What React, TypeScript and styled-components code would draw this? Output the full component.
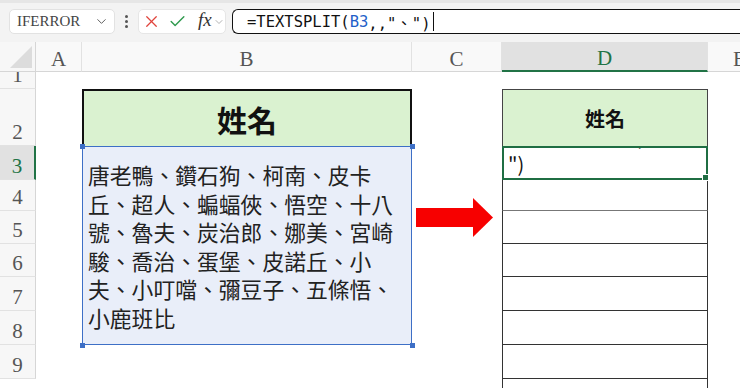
import React from 'react';
import styled, { createGlobalStyle } from 'styled-components';
import { ChevronDown, X, Check } from 'lucide-react';

const GlobalStyle = createGlobalStyle`
  html, body {
    margin: 0;
    padding: 0;
    background: #fff;
    overflow: hidden;
  }
  body {
    width: 740px;
    height: 388px;
    font-family: "Noto Sans CJK TC", "Noto Sans", sans-serif;
  }
`;

const Toolbar = styled.div`
  height: 42px;
  box-sizing: border-box;
  padding: 6px 0 0 9px;
  background: #f3f3f3;
  border-top: 3px solid #e6e6e6;
  display: flex;
  align-items: flex-start;
`;

const NameBox = styled.div`
  width: 106px;
  height: 25px;
  box-sizing: border-box;
  background: #fff;
  border: 1px solid #e2e2e2;
  border-radius: 5px;
  display: flex;
  align-items: center;
  justify-content: space-between;
  padding: 0 5px 0 7px;
  font-family: "Liberation Serif", serif;
  font-size: 15px;
  color: #444;
`;

const Dots = styled.div`
  width: 23px;
  height: 25px;
  display: flex;
  flex-direction: column;
  align-items: center;
  justify-content: center;
  gap: 2px;

  span {
    width: 3px;
    height: 3px;
    border-radius: 50%;
    background: #555;
  }
`;

const FxBox = styled.div`
  width: 88px;
  height: 25px;
  box-sizing: border-box;
  background: #fff;
  border: 1px solid #e6e6e6;
  border-radius: 5px;
  display: flex;
  align-items: center;
  padding-left: 3px;
`;

const FxLabel = styled.span`
  font-family: "Liberation Serif", serif;
  font-style: italic;
  font-size: 19px;
  color: #333;
  margin: -3px 1px 0 11px;
`;

const FormulaBox = styled.div`
  flex: 1;
  height: 25px;
  margin-left: 6px;
  box-sizing: border-box;
  border: 1.5px solid #111;
  border-right: none;
  border-radius: 6px 0 0 6px;
  background: #fff;
  display: flex;
  align-items: center;
  padding-left: 14px;
  font-family: "DejaVu Sans Mono", "Noto Sans CJK TC", monospace;
  font-size: 15.5px;
  color: #111;
  white-space: pre;
`;

const Ref = styled.span`
  color: #1f5fc9;
`;

const Caret = styled.span`
  display: inline-block;
  width: 1px;
  height: 19px;
  background: #111;
  margin-left: 2px;
`;

const Sheet = styled.div`
  display: grid;
  grid-template-columns: 36px 46px 330px 90px 206px 64px;
  grid-template-rows: 30px 17px 57px 34px 31px 33px 33px 34px 34px 34px 34px;
`;

const Corner = styled.div`
  grid-column: 1;
  grid-row: 1;
  background: #f7f7f7;
  border-right: 1px solid #d6d6d6;
  border-bottom: 1px solid #d6d6d6;
  display: flex;
  align-items: flex-end;
  justify-content: flex-end;
  padding: 0 3px 3px 0;

  &::after {
    content: '';
    width: 0;
    height: 0;
    border-left: 22px solid transparent;
    border-bottom: 22px solid #dcdcdc;
  }
`;

const ColHead = styled.div<{ $active?: boolean }>`
  grid-row: 1;
  box-sizing: border-box;
  background: ${p => (p.$active ? '#e1e1e1' : '#f9f9f9')};
  border-right: 1px solid #e2e2e2;
  border-bottom: ${p => (p.$active ? '2px solid #217346' : '1px solid #d6d6d6')};
  display: flex;
  align-items: center;
  justify-content: center;
  padding-top: 5px;
  font-family: "Liberation Serif", serif;
  font-size: 21px;
  color: ${p => (p.$active ? '#217346' : '#555')};
`;

const RowHead = styled.div<{ $row: number; $active?: boolean }>`
  grid-column: 1;
  grid-row: ${p => p.$row + 1};
  box-sizing: border-box;
  overflow: hidden;
  background: ${p => (p.$active ? '#e1e1e1' : '#f7f7f7')};
  border-right: ${p => (p.$active ? '2px solid #217346' : '1px solid #d6d6d6')};
  border-bottom: 1px solid #e2e2e2;
  display: flex;
  align-items: flex-end;
  justify-content: center;
  line-height: 24px;
  padding-bottom: 1px;
  font-family: "Liberation Serif", serif;
  font-size: 21px;
  color: ${p => (p.$active ? '#217346' : '#555')};
`;

const TitleCell = styled.div<{ $col: number; $big?: boolean }>`
  grid-column: ${p => p.$col};
  grid-row: 3;
  box-sizing: border-box;
  background: #daf2d0;
  border: ${p => (p.$big ? '2px solid #111' : '1px solid #444')};
  border-bottom: none;
  display: flex;
  align-items: center;
  justify-content: center;
  font-size: ${p => (p.$big ? '30px' : '20px')};
  font-weight: ${p => (p.$big ? 700 : 600)};
  color: #111;
`;

const SourceCell = styled.div`
  grid-column: 3;
  grid-row: 4 / span 6;
  position: relative;
  box-sizing: border-box;
  background: #e9eef9;
  border: 1.5px solid #3d6fc6;
  padding: 14px 0 0 5px;
  font-size: 21.8px;
  line-height: 28.6px;
  color: #222;
`;

const Handle = styled.span<{ $top?: boolean; $left?: boolean }>`
  position: absolute;
  width: 5px;
  height: 5px;
  background: #3d6fc6;
  ${p => (p.$top ? 'top: -3.5px;' : 'bottom: -3.5px;')}
  ${p => (p.$left ? 'left: -3.5px;' : 'right: -3.5px;')}
`;

const Line = styled.div`
  white-space: nowrap;
`;

const ArrowCell = styled.div`
  grid-column: 4;
  grid-row: 5 / span 2;
  display: flex;
  align-items: center;
  padding: 10px 0 0 4px;
`;

const ActiveCell = styled.div`
  grid-column: 5;
  grid-row: 4;
  position: relative;
  box-sizing: border-box;
  border: 2px solid #1f6e43;
  display: flex;
  align-items: center;
  padding-left: 4px;
  font-size: 20px;
  color: #111;
`;

const FillHandle = styled.span`
  position: absolute;
  right: -3px;
  bottom: -3px;
  width: 5px;
  height: 5px;
  background: #1f6e43;
  border: 1px solid #fff;
`;

const Clipped = styled.span`
  position: absolute;
  top: 0;
  left: 124px;
  height: 5px;
  overflow: hidden;
  font-size: 20px;
  line-height: 20px;
  white-space: pre;
  color: #333;

  span {
    display: block;
    margin-top: -12px;
  }
`;

const ResultCell = styled.div<{ $row: number; $soft?: boolean }>`
  grid-column: 5;
  grid-row: ${p => p.$row + 1};
  box-sizing: border-box;
  border-left: 1px solid #333;
  border-right: 1px solid #333;
  border-bottom: 1px solid ${p => (p.$soft ? '#777' : '#333')};
`;

const lines = [
  '唐老鴨、鑽石狗、柯南、皮卡',
  '丘、超人、蝙蝠俠、悟空、十八',
  '號、魯夫、炭治郎、娜美、宮崎',
  '駿、喬治、蛋堡、皮諾丘、小',
  '夫、小叮噹、彌豆子、五條悟、',
  '小鹿班比',
];

const Arrow: React.FC = () => (
  <svg width="77" height="39" viewBox="0 0 77 39">
    <rect x="0" y="10" width="58" height="19" fill="#f70000" />
    <polygon points="57,0 77,19.5 57,39" fill="#f70000" />
  </svg>
);

const App: React.FC = () => {
  const rows = [1, 2, 3, 4, 5, 6, 7, 8, 9];
  return (
    <React.Fragment>
      <GlobalStyle />
      <Toolbar>
        <NameBox>
          IFERROR
          <ChevronDown size={15} color="#555" strokeWidth={1.5} />
        </NameBox>
        <Dots>
          <span />
          <span />
          <span />
        </Dots>
        <FxBox>
          <X size={19} color="#e0433b" strokeWidth={1.6} />
          <Check size={19} color="#2f9a4e" strokeWidth={1.8} style={{ marginLeft: 7 }} />
          <FxLabel>fx</FxLabel>
          <ChevronDown size={12} color="#999" strokeWidth={1.5} />
        </FxBox>
        <FormulaBox>
          =TEXTSPLIT(<Ref>B3</Ref>,,"、")<Caret />
        </FormulaBox>
      </Toolbar>
      <Sheet>
        <Corner />
        <ColHead>A</ColHead>
        <ColHead>B</ColHead>
        <ColHead>C</ColHead>
        <ColHead $active>D</ColHead>
        <ColHead>E</ColHead>
        {rows.map(r => (
          <RowHead key={r} $row={r} $active={r === 3}>
            {r}
          </RowHead>
        ))}
        <TitleCell $col={3} $big>
          姓名
        </TitleCell>
        <SourceCell>
          {lines.map(l => (
            <Line key={l}>{l}</Line>
          ))}
          <Handle $top $left />
          <Handle $top />
          <Handle $left />
          <Handle />
        </SourceCell>
        <ArrowCell>
          <Arrow />
        </ArrowCell>
        <TitleCell $col={5}>姓名</TitleCell>
        <ActiveCell>
          ")
          <Clipped>
            <span>{'、    "'}</span>
          </Clipped>
          <FillHandle />
        </ActiveCell>
        {[4, 5, 6, 7, 8, 9, 10].map(r => (
          <ResultCell key={r} $row={r} $soft={r === 4} />
        ))}
      </Sheet>
    </React.Fragment>
  );
};

export default App;
